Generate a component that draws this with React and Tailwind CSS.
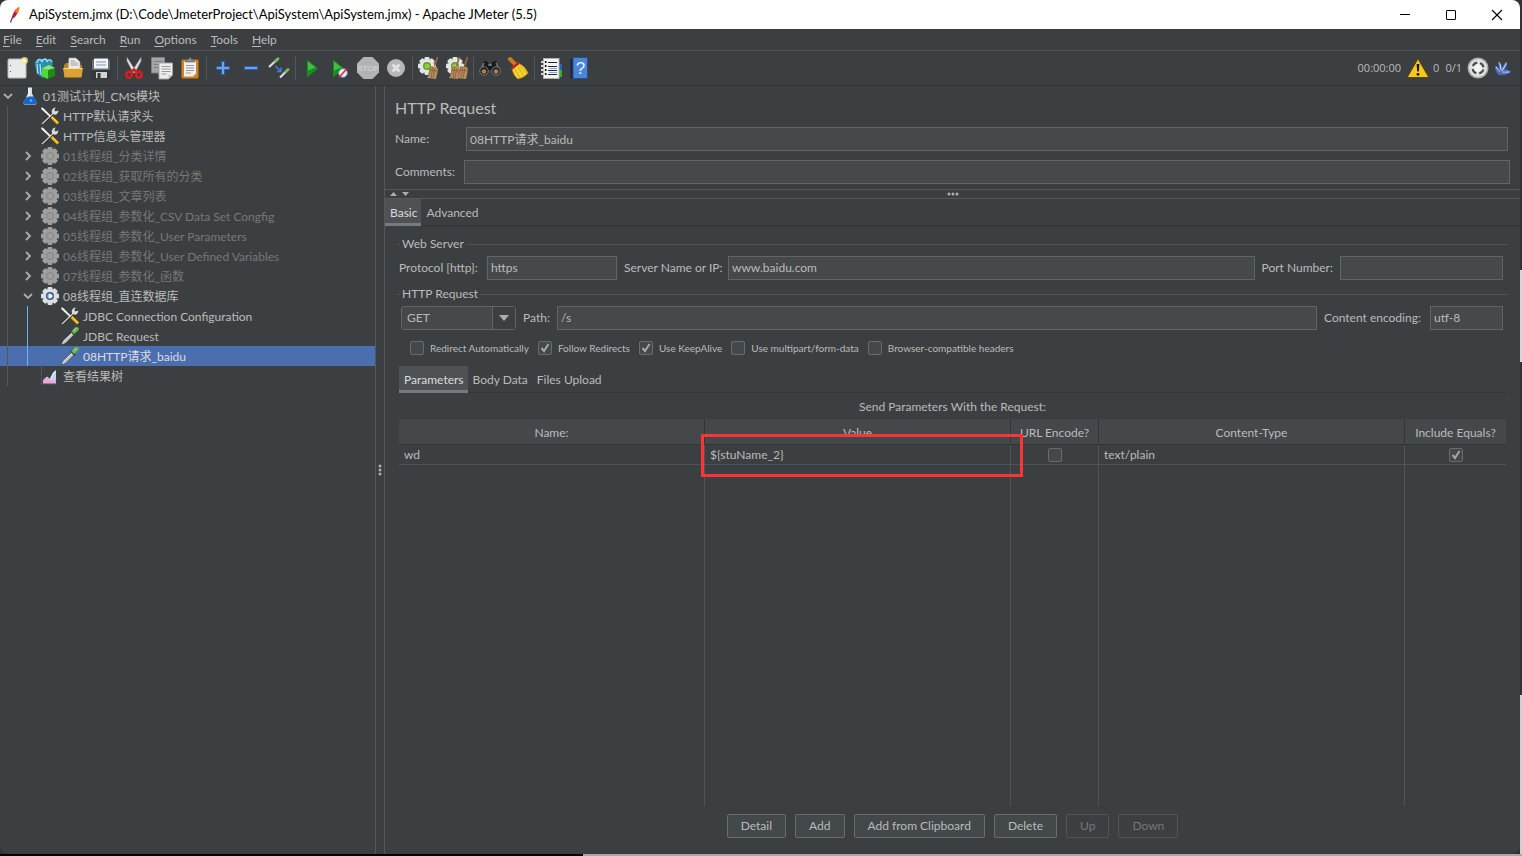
import { useState } from "react";

const menus = ["File", "Edit", "Search", "Run", "Options", "Tools", "Help"];

const tree = [
  { depth: 0, label: "01测试计划_CMS模块", icon: "flask", state: "open" },
  { depth: 1, label: "HTTP默认请求头", icon: "tools" },
  { depth: 1, label: "HTTP信息头管理器", icon: "tools" },
  { depth: 1, label: "01线程组_分类详情", icon: "gearOff", state: "closed", disabled: true },
  { depth: 1, label: "02线程组_获取所有的分类", icon: "gearOff", state: "closed", disabled: true },
  { depth: 1, label: "03线程组_文章列表", icon: "gearOff", state: "closed", disabled: true },
  { depth: 1, label: "04线程组_参数化_CSV Data Set Congfig", icon: "gearOff", state: "closed", disabled: true },
  { depth: 1, label: "05线程组_参数化_User Parameters", icon: "gearOff", state: "closed", disabled: true },
  { depth: 1, label: "06线程组_参数化_User Defined Variables", icon: "gearOff", state: "closed", disabled: true },
  { depth: 1, label: "07线程组_参数化_函数", icon: "gearOff", state: "closed", disabled: true },
  { depth: 1, label: "08线程组_直连数据库", icon: "gear", state: "open" },
  { depth: 2, label: "JDBC Connection Configuration", icon: "tools" },
  { depth: 2, label: "JDBC Request", icon: "pipette" },
  { depth: 2, label: "08HTTP请求_baidu", icon: "pipette" },
  { depth: 1, label: "查看结果树", icon: "chart" },
];

const toolbar = [
  ["new", "templates", "open", "save"],
  ["cut", "copy", "paste"],
  ["expand", "collapse", "toggle"],
  ["start", "startNoTimers", "stop", "shutdown"],
  ["clear", "clearAll"],
  ["search", "resetSearch"],
  ["functions", "help"],
];

const gearTeeth = [0, 45, 90, 135, 180, 225, 270, 315];

function Gear({ body, ring, hub }) {
  return (
    <g>
      {gearTeeth.map((a) => (
        <rect key={a} x="7.500" y="1" width="5" height="5" rx="1.200" fill={body} transform={`rotate(${a} 10 10)`} />
      ))}
      <circle cx="10" cy="10" r="7.100" fill={body} />
      <circle cx="10" cy="10" r="4" fill={ring} />
      <circle cx="10" cy="10" r="2.600" fill={hub} />
    </g>
  );
}

function Broom({ x = 0 }) {
  return (
    <g transform={`translate(${x} 0)`}>
      <path d="M20.500 1l-3 9" stroke="#9a6a40" strokeWidth="1.600" />
      <path d="M13 10l7 1 1 3-2 9-9-1c2-3 2-8 3-12z" fill="#b98d62" />
      <path d="M14 11l-3 10M16 11l-2 11M18 12l-2 10M12.500 14l8 1" stroke="#80582f" strokeWidth=".7" />
    </g>
  );
}

const drawings = {
  flask: (
    <>
      <path d="M8 1.500h4v6l4.500 9c.4 1.200-.2 2-1.200 2H4.700c-1 0-1.600-.8-1.200-2L8 7.500z" fill="#d7e3ea" />
      <path d="M6.300 10.500h7.400l3 6c.3 1-.2 1.500-.9 1.500H4.200c-.7 0-1.200-.5-.9-1.500z" fill="#1667c7" />
      <path d="M9 2.500v6l-2 3" stroke="#fff" strokeWidth="1" fill="none" />
      <circle cx="11" cy="14.500" r="1.200" fill="#69b3f5" />
    </>
  ),
  tools: (
    <>
      <path d="M2 18L14.500 6" stroke="#222" strokeWidth="3" />
      <path d="M2 18L14.500 6" stroke="#c9cbcb" strokeWidth="1.600" />
      <path d="M12 7c-.8-2.900.9-5.400 3.800-5.600L14.300 4l1.200 1.500 2.800-1c.2 2.900-2 4.700-4.500 4.100z" fill="#dadcdc" />
      <path d="M1 1.500l2 .2L11 9.800 9.800 11 1.700 3.500z" fill="#f2f2f2" />
      <path d="M11.500 11l6.500 6.500" stroke="#e9a506" strokeWidth="3" />
      <path d="M12 10.900l6.300 6.300" stroke="#ffd640" strokeWidth="1.200" />
    </>
  ),
  gearOff: <Gear body="#9f9f9f" ring="#8c8c8c" hub="#9f9f9f" />,
  gear: (
    <>
      <Gear body="#dcdfe2" ring="#34588f" hub="#9fbde6" />
      <path d="M9 7.500l3.800 2.500L9 12.500z" fill="#fff" />
    </>
  ),
  pipette: (
    <>
      <path d="M1 19l2-4.300L11.500 6.500l2.300 2.300-8.400 8.500z" fill="#e3e6e6" stroke="#3e4242" strokeWidth=".7" />
      <path d="M4 16.500L12 8.500" stroke="#9aa0a0" strokeWidth="1" />
      <path d="M10.500 4.800l4.700 4.700" stroke="#2c5f22" strokeWidth="1.800" />
      <path d="M11.600 5.600l3.200-4c1.300-1.200 4.400-.6 4 1.800-.1.600-.5 1-1 1.400l-3.600 3.200z" fill="#6bb356" />
      <path d="M13.500 5l2.800-2.800" stroke="#b5e3a4" strokeWidth="1" />
    </>
  ),
  chart: (
    <>
      <path d="M1.500 1v17H18" stroke="#6a6e70" strokeDasharray="1 1" fill="none" />
      <path d="M3 17.500v-3l4-3 3 2 4-6.500 2-1.500v12z" fill="#f3a3dc" />
      <path d="M10 12.500l3-6 3-2v9l-3 1.500z" fill="#b9d7f4" />
      <path d="M3.500 14l3.500-3 3 2.500 5.500-9" stroke="#fff" strokeWidth=".8" fill="none" />
    </>
  ),
  new: (
    <>
      <rect x="3" y="3" width="18" height="19" rx="1" fill="#e9e9e9" stroke="#b9b9b9" />
      <path d="M5.500 9v1M5.500 15v1" stroke="#666" />
      <circle cx="19.500" cy="4.500" r="3.500" fill="#f6ea88" opacity=".8" />
      <circle cx="19.500" cy="4.500" r="1.600" fill="#fffbe0" />
    </>
  ),
  templates: (
    <>
      <path d="M1.500 6l7-3 6 1 5 2v13l-10 3-6-5z" fill="#2b8fb4" />
      <path d="M4 7c0-4 4-5 5-1 1-4 5-4 5 0 1-3 4-3 5 0" stroke="#8fe0f5" strokeWidth="1.500" fill="none" />
      <path d="M4 8l1 10M7 8l1 11" stroke="#c4eefa" />
      <path d="M9 12l7-3 6 3v8l-8 3-5-3z" fill="#1c8a1c" />
      <path d="M9 12l6 2v9l-6-3z" fill="#4fdc38" />
      <path d="M9 12l7-3 6 3-7 2z" fill="#8ee572" />
    </>
  ),
  open: (
    <>
      <path d="M3 9l2-2h4l2 2h10v11H3z" fill="#b9801e" />
      <path d="M8 2h7l4 4v9H7z" fill="#ececec" stroke="#aaa" strokeWidth=".6" />
      <path d="M9.500 5H14M9.500 7H17M9.500 9H17" stroke="#8d8d8d" strokeWidth=".8" />
      <path d="M2 12h20l-1.500 9.500h-17z" fill="#dda035" />
      <path d="M2.500 12.500h19" stroke="#ffdd88" />
    </>
  ),
  save: (
    <>
      <path d="M2.500 4.500l1-1.500h17l1 1.500V22h-19z" fill="#6b7078" stroke="#292b2e" strokeWidth=".7" />
      <rect x="5" y="2.500" width="14" height="10" fill="#f3f4f6" />
      <path d="M7 6h10M7 9h10" stroke="#7694bd" />
      <path d="M3 14h18v8H3z" fill="#34373b" />
      <rect x="7" y="16" width="11" height="6" fill="#d2d2d2" />
      <rect x="8.500" y="17" width="3" height="5" fill="#333" />
    </>
  ),
  cut: (
    <>
      <path d="M5 1.500l8.500 13-2.200 2.500L5 5zM19 1.500l-8.500 13 2.200 2.500L19 5z" fill="#e4e6e6" stroke="#9a9d9e" strokeWidth=".6" />
      <ellipse cx="7" cy="18.800" rx="2.800" ry="3" stroke="#dd1c1c" strokeWidth="2.400" fill="none" />
      <ellipse cx="17" cy="18.800" rx="2.800" ry="3" stroke="#dd1c1c" strokeWidth="2.400" fill="none" />
      <path d="M8.500 16l3.500-2.500 3.500 2.500" stroke="#dd1c1c" strokeWidth="2.400" fill="none" />
    </>
  ),
  copy: (
    <>
      <path d="M1.500 1.500h13V17h-13z" fill="#a4a6a6" stroke="#7d7f80" />
      <path d="M4 5.500h9M4 8.500h8M4 11.500h5" stroke="#7d7f80" />
      <path d="M9 7h13.500v12l-4 4H9z" fill="#ededed" stroke="#a6a6a6" />
      <path d="M11.500 10.500h9M11.500 13h9M11.500 15.500h9M11.500 18h5" stroke="#9c9c9c" />
      <path d="M22.500 19h-4v4z" fill="#c4c4c4" />
    </>
  ),
  paste: (
    <>
      <rect x="3.500" y="3.500" width="17" height="19" rx="1.500" fill="#c9852b" stroke="#93590f" />
      <path d="M6 5.500h12v12l-3 3H6z" fill="#f0f0f0" />
      <path d="M8 9.500h8M8 12h8M8 14.500h8M8 17h5" stroke="#999" />
      <path d="M7.500 6l1-2.500h2C10.500 1 13.500 1 13.500 3.500h2l1 2.500z" fill="#8d9090" stroke="#555" strokeWidth=".6" />
    </>
  ),
  expand: <path d="M10.500 5.500h3v5h5v3h-5v5h-3v-5h-5v-3h5z" fill="#6ba4e8" stroke="#275fae" />,
  collapse: <rect x="5.500" y="10.500" width="13" height="3" fill="#6ba4e8" stroke="#275fae" />,
  toggle: (
    <>
      <path d="M2 11l6.500-6" stroke="#dcdfdf" strokeWidth="2.200" />
      <path d="M8.500 5L11 2.800" stroke="#74b95e" strokeWidth="3" strokeLinecap="round" />
      <path d="M13 21.500l6-6" stroke="#dcdfdf" strokeWidth="2.200" />
      <path d="M19 15.500l2-2" stroke="#74b95e" strokeWidth="3" strokeLinecap="round" />
      <path d="M8.500 10l5 5M14 11.500v4h-4" stroke="#3c7de0" strokeWidth="1.500" fill="none" />
    </>
  ),
  start: (
    <>
      <path d="M7 3.500l11 9L7 21.500z" fill="#178f1b" />
      <path d="M8 5.500l7.500 6L8 14.500z" fill="#43bd43" />
    </>
  ),
  startNoTimers: (
    <>
      <path d="M5 3.500l11 9L5 21.500z" fill="#178f1b" />
      <path d="M6 5.500l7.500 6L6 14.500z" fill="#43bd43" />
      <circle cx="15" cy="17" r="4.400" fill="#e7edf5" stroke="#5983bd" />
      <path d="M11 21.500l8-9" stroke="#e02a2a" strokeWidth="1.500" />
    </>
  ),
  stop: (
    <>
      <path d="M7.500 1h9L23 7.500v9L16.500 23h-9L1 16.500v-9z" fill="#b4b4b4" />
      <text x="12" y="15" textAnchor="middle" fontSize="8" fontWeight="bold" fill="#cfcfcf" fontFamily="Liberation Sans, sans-serif">
        STOP
      </text>
    </>
  ),
  shutdown: (
    <>
      <circle cx="12" cy="12" r="9" fill="#b6b6b6" />
      <path d="M8.500 8.500l7 7M15.500 8.500l-7 7" stroke="#e2e2e2" strokeWidth="3" />
    </>
  ),
  clear: (
    <>
      <Gear body="#e3e5e6" ring="#5f9d27" hub="#8ed13f" />
      <Broom />
    </>
  ),
  clearAll: (
    <>
      <Gear body="#e3e5e6" ring="#5f9d27" hub="#8ed13f" />
      <Broom x={-6} />
      <Broom x={2} />
    </>
  ),
  search: (
    <>
      <path d="M6 5l4 1v4h4V6l4-1 4 9-1 4h-6l-1-4h-4l-1 4H3l-1-4z" fill="#17191a" />
      <path d="M6 7l-2.500 5M18 7l2.500 5M10.500 9h3" stroke="#85898b" strokeWidth="1.300" />
      <circle cx="6" cy="15" r="4.200" fill="#202020" stroke="#777b7d" />
      <circle cx="18" cy="15" r="4.200" fill="#202020" stroke="#777b7d" />
      <circle cx="6" cy="15.500" r="2.300" fill="#bd7850" />
      <circle cx="18" cy="15.500" r="2.300" fill="#bd7850" />
    </>
  ),
  resetSearch: (
    <>
      <path d="M4 3l5 5" stroke="#c77a21" strokeWidth="4" strokeLinecap="round" />
      <path d="M13 7.500c4 2 7 5 9 9.500-2 3-6 5-10 6-3-2-5-6-6-10z" fill="#f2d430" stroke="#b9920f" strokeWidth=".7" />
      <path d="M12 11l6 9M9 13l5 9M14 10l7 7" stroke="#c49d12" strokeWidth=".7" />
      <path d="M5.500 12.800l7.500-6" stroke="#c91f1f" strokeWidth="2.500" />
    </>
  ),
  functions: (
    <>
      <path d="M19 8h4v6h-4z" fill="#2364c4" />
      <path d="M19 14h4v7h-4z" fill="#36ad2c" />
      <rect x="4.500" y="2.500" width="15.500" height="20" fill="#f4f4f4" stroke="#b0b0b0" />
      <path d="M9 6.500h9M9 10.500h9M9 14.500h9M9 18.500h9" stroke="#20262c" />
      <path d="M10 12.500h8M10 16.500h8" stroke="#85a8d8" />
      <path d="M2 6h5M2 10h5M2 14h5M2 18h5" stroke="#d5d5d5" strokeWidth="2" />
      <path d="M6 6h1.500M6 10h1.500M6 14h1.500M6 18h1.500" stroke="#111" strokeWidth="2" />
    </>
  ),
  help: (
    <>
      <path d="M3.500 3l3-1.500v21h-3z" fill="#16263d" />
      <rect x="6" y="1.500" width="14.500" height="21" fill="#4a86d6" stroke="#264f8d" />
      <text x="13.500" y="18" textAnchor="middle" fontSize="17" fill="#e9f2ff" fontFamily="Liberation Sans, sans-serif">
        ?
      </text>
    </>
  ),
};

function Icon({ name, box = 24, className }) {
  return (
    <svg viewBox={`0 0 ${box} ${box}`} className={`shrink-0 ${className}`} fill="none" aria-hidden="true">
      {drawings[name]}
    </svg>
  );
}

function TitleBar() {
  const btn = "flex w-[46px] items-center justify-center";
  return (
    <header className="flex h-[29px] shrink-0 items-stretch bg-white text-black">
      <div className="flex flex-1 items-center pl-2">
        <svg viewBox="0 0 14 18" className="mr-[7px] h-[18px] w-[14px]" fill="none">
          <path d="M11 1c1 2-1 6-4 10l-3 2c0-5 3-10 7-12z" fill="#d22128" />
          <path d="M11 1c1 1 0 4-2 6l-2-1c1-2 2-4 4-5z" fill="#f08a24" />
          <path d="M7 7c-2 3-3.500 6-4.500 9.500" stroke="#6d2a7f" strokeWidth="1.200" />
        </svg>
        <h1 className="pb-[2px] text-[13px]">
          ApiSystem.jmx (D:\Code\JmeterProject\ApiSystem\ApiSystem.jmx) - Apache JMeter (5.5)
        </h1>
      </div>
      <button aria-label="Minimize" className={btn}>
        <span className="h-px w-[10px] bg-black" />
      </button>
      <button aria-label="Maximize" className={btn}>
        <span className="size-[10px] rounded-[1px] border border-black" />
      </button>
      <button aria-label="Close" className={btn}>
        <svg viewBox="0 0 12 12" className="size-3">
          <path d="M1 1l10 10M11 1L1 11" stroke="#000" strokeWidth="1.100" />
        </svg>
      </button>
    </header>
  );
}

function MenuBar() {
  return (
    <nav className="flex h-[22px] shrink-0 items-center gap-[14px] border-b border-[#515151] pl-[3px]">
      {menus.map((m) => (
        <button key={m}>
          <span className="underline underline-offset-2">{m[0]}</span>
          {m.slice(1)}
        </button>
      ))}
    </nav>
  );
}

function Toolbar() {
  return (
    <div className="flex h-[35px] shrink-0 items-center border-b border-[#323232] pr-2 pl-[3px]">
      {toolbar.map((group, i) => (
        <div key={i} className="flex items-center">
          {i > 0 && <span className="mx-[2px] h-6 w-px bg-[#515658]" />}
          {group.map((name) => (
            <button key={name} aria-label={name} className="flex h-7 w-7 items-center justify-center">
              <Icon name={name} className="size-6" />
            </button>
          ))}
        </div>
      ))}
      <div className="ml-auto flex items-center">
        <span className="font-['Open_Sans'] text-[11px]">00:00:00</span>
        <button aria-label="Show log" className="mr-[3px] ml-[5px]">
          <svg viewBox="0 0 24 22" className="h-[22px] w-6">
            <path d="M12 1.500L23 20.500H1z" fill="#f8c81c" stroke="#57470b" strokeWidth="1.200" strokeLinejoin="round" />
            <path d="M10.600 7h2.800l-.6 7.500h-1.600z" fill="#151515" />
            <circle cx="12" cy="17.300" r="1.400" fill="#151515" />
          </svg>
        </button>
        <span className="font-['Open_Sans'] text-[11px]">0</span>
        <span className="ml-[6px] font-['Open_Sans'] text-[11px]">0/1</span>
        <svg viewBox="0 0 22 22" className="ml-[5px] size-[22px]" fill="none">
          <circle cx="11" cy="11" r="10.500" fill="#a9a9a9" />
          <circle cx="11" cy="11" r="9" fill="#e3e3e3" />
          <circle cx="11" cy="11" r="5.500" stroke="#4b4d4e" strokeWidth="2.200" strokeDasharray="5.600 3.040" strokeDashoffset="-1.500" />
          <circle cx="11" cy="11" r="3.800" fill="#f4f4f4" />
        </svg>
        <svg viewBox="0 0 18 18" className="ml-[5px] size-[18px]" fill="none">
          <path d="M1 7c1-1 3 1 4 3L4 3c2 0 4 3 4 5l4-5c2 1 1 5-1 7l6 2c0 2-4 4-8 4H6c-3 0-5-5-5-9z" fill="#3f6fd0" />
          <path d="M2 8l4 5M6 5l1 6M12 5l-4 7M15 13H8" stroke="#dbe6fb" />
          <path d="M3 11l5 2 5-1" stroke="#e4572e" strokeWidth=".8" />
          <path d="M5 3l1 2M12.500 3.500l-1 1.500" stroke="#f2b33c" />
        </svg>
      </div>
    </div>
  );
}

function TreeRow({ node, selected, onSelect }) {
  return (
    <li
      role="treeitem"
      aria-selected={selected}
      onClick={onSelect}
      className={`flex h-5 items-center ${selected ? "bg-[#4b6eaf] text-[#dddddd]" : ""} ${node.disabled ? "text-[#777777]" : ""}`}
    >
      {node.depth > 0 && <span className="ml-[7px] h-5 w-[13px] border-l border-[#55585a]" />}
      {node.depth > 1 && <span className="ml-[7px] h-5 w-[13px] border-l border-[#6fb0ee]" />}
      {node.state ? (
        <button aria-label="Toggle" className="flex w-5 justify-start pl-[3px]">
          <svg viewBox="0 0 10 10" className="size-[10px]" fill="none">
            <path d={node.state === "open" ? "M1 3l4 4 4-4" : "M3 1l4 4-4 4"} stroke="#adadad" strokeWidth="1.800" />
          </svg>
        </button>
      ) : (
        <span className="w-5" />
      )}
      <Icon name={node.icon} box={20} className="mr-[3px] size-5" />
      <span className="pt-[2px] whitespace-nowrap">{node.label}</span>
    </li>
  );
}

function Check({ id, defaultChecked }) {
  return (
    <span className="relative block size-[14px]">
      <input
        id={id}
        type="checkbox"
        aria-label={id}
        defaultChecked={defaultChecked}
        className="peer block size-[14px] appearance-none rounded-[2px] border border-[#6b6b6b] bg-[#43494a]"
      />
      <svg viewBox="0 0 14 14" className="pointer-events-none absolute inset-0 hidden size-[14px] peer-checked:block" fill="none">
        <path d="M3.500 7l2.500 3L10.500 3" stroke="#a7a7a7" strokeWidth="2" />
      </svg>
    </span>
  );
}

function Field({ id, label, value = "", labelClass = "", inputClass = "" }) {
  return (
    <>
      <label htmlFor={id} className={`shrink-0 whitespace-nowrap ${labelClass}`}>
        {label}
      </label>
      <input
        id={id}
        defaultValue={value}
        className={`h-6 min-w-0 border border-[#646464] bg-[#45494a] px-[3px] pb-[2px] outline-none ${inputClass}`}
      />
    </>
  );
}

function Tabs({ items }) {
  const [active, setActive] = useState(items[0]);
  return (
    <div role="tablist" className="flex h-[27px] shrink-0 border-b border-[#323537]">
      {items.map((t) => (
        <button
          key={t}
          role="tab"
          aria-selected={t === active}
          onClick={() => setActive(t)}
          className={`h-[27px] border-b-3 pt-[3px] pr-1 pl-[5px] ${
            t === active ? "border-[#747a80] bg-[#4e5254] text-[#dddddd]" : "border-transparent"
          }`}
        >
          {t}
        </button>
      ))}
    </div>
  );
}

function ParamsTable() {
  const th = "h-[26px] border-b border-[#323537] bg-[#45484a] p-0 pt-[2px] font-normal";
  const td = "h-5 border-b border-[#505355] px-[5px] py-0";
  const line = "border-r border-r-[#505355]";
  return (
    <table className="h-full w-full table-fixed border-separate border-spacing-0 text-left">
      <thead>
        <tr className="text-center">
          <th className={`${th} border-r`}>Name:</th>
          <th className={`${th} border-r`}>Value</th>
          <th className={`${th} w-[88px] border-r`}>URL Encode?</th>
          <th className={`${th} border-r`}>Content-Type</th>
          <th className={`${th} w-[101px]`}>Include Equals?</th>
        </tr>
      </thead>
      <tbody>
        <tr>
          <td className={`${td} ${line}`}>wd</td>
          <td className={`${td} ${line} relative`}>
            {"${stuName_2}"}
            <span className="pointer-events-none absolute -top-[11px] -right-[13px] -left-1 h-[43px] border-3 border-[#fb3434]" />
          </td>
          <td className={`${td} ${line}`}>
            <div className="flex justify-center">
              <Check id="URL Encode" />
            </div>
          </td>
          <td className={`${td} ${line}`}>text/plain</td>
          <td className={td}>
            <div className="flex justify-center">
              <Check id="Include Equals" defaultChecked />
            </div>
          </td>
        </tr>
        <tr className="h-full">
          <td className={line} />
          <td className={line} />
          <td className={line} />
          <td className={line} />
          <td />
        </tr>
      </tbody>
    </table>
  );
}

const options = [
  { label: "Redirect Automatically" },
  { label: "Follow Redirects", checked: true },
  { label: "Use KeepAlive", checked: true },
  { label: "Use multipart/form-data" },
  { label: "Browser-compatible headers" },
];

const actions = [
  { label: "Detail" },
  { label: "Add" },
  { label: "Add from Clipboard" },
  { label: "Delete" },
  { label: "Up", disabled: true },
  { label: "Down", disabled: true },
];

function RequestPanel() {
  return (
    <main className="flex min-w-0 flex-1 flex-col border-l border-[#55585a]">
      <div className="pt-[10px] pl-[10px]">
        <h2 className="text-base leading-6">HTTP Request</h2>
        <div className="mt-[7px] flex items-center pr-3">
          <Field id="name" label="Name:" value="08HTTP请求_baidu" labelClass="w-[71px]" inputClass="flex-1" />
        </div>
        <div className="mt-[9px] flex items-center pr-[10px]">
          <Field id="comments" label="Comments:" labelClass="w-[69px]" inputClass="flex-1" />
        </div>
      </div>

      {/* Splitter between the header and the sampler settings */}
      <div className="mt-[5px] flex h-[10px] shrink-0 items-center justify-between border-y border-[#55585a] px-[5px]">
        <svg viewBox="0 0 20 6" className="h-[6px] w-5" fill="#adadad">
          <path d="M0 5h7L3.500 1zM12 1h7l-3.500 4z" />
        </svg>
        <svg viewBox="0 0 12 4" className="h-1 w-3" fill="#adadad">
          <circle cx="2" cy="2" r="1.500" />
          <circle cx="6" cy="2" r="1.500" />
          <circle cx="10" cy="2" r="1.500" />
        </svg>
        <span className="w-5" />
      </div>

      <Tabs items={["Basic", "Advanced"]} />

      <fieldset className="mx-3 mt-[10px] border-t border-[#515456] pr-[5px] pl-[2px]">
        <legend className="ml-[1px] px-[2px] leading-4">Web Server</legend>
        <div className="flex items-center gap-[7px] pt-1">
          <Field id="protocol" label="Protocol [http]:" value="https" labelClass="w-[81px]" inputClass="w-[130px]" />
          <Field id="server" label="Server Name or IP:" value="www.baidu.com" labelClass="w-[97px]" inputClass="flex-1" />
          <Field id="port" label="Port Number:" inputClass="w-[163px]" />
        </div>
      </fieldset>

      <fieldset className="mx-3 mt-[6px] border-t border-[#515456] pr-[5px] pl-[2px]">
        <legend className="ml-[1px] px-[2px] leading-4">HTTP Request</legend>
        <div className="flex items-center gap-[7px] pt-1 pl-[2px]">
          <div className="relative h-6 w-[115px] shrink-0">
            <select
              aria-label="Method"
              className="block h-6 w-full appearance-none rounded-[3px] border border-[#646464] bg-[#45494a] pl-[5px] outline-none"
            >
              <option>GET</option>
              <option>POST</option>
            </select>
            <span className="pointer-events-none absolute inset-y-px right-px flex w-[23px] items-center justify-center border-l border-[#646464] bg-[#3c3f41]">
              <svg viewBox="0 0 10 6" className="h-[6px] w-[10px]" fill="#adadad">
                <path d="M0 0h10L5 6z" />
              </svg>
            </span>
          </div>
          <Field id="path" label="Path:" value="/s" inputClass="flex-1" />
          <Field id="encoding" label="Content encoding:" value="utf-8" labelClass="w-[99px]" inputClass="w-[73px]" />
        </div>
        <div className="mt-[11px] flex h-[14px] items-center gap-[9px] pl-[11px] text-[10px]">
          {options.map((o) => (
            <div key={o.label} className="flex items-center gap-[6px]">
              <Check id={o.label} defaultChecked={o.checked} />
              <label htmlFor={o.label}>{o.label}</label>
            </div>
          ))}
        </div>
      </fieldset>

      <section className="mx-[14px] mt-[11px] flex min-h-0 flex-1 flex-col">
        <Tabs items={["Parameters", "Body Data", "Files Upload"]} />
        <h3 className="flex h-[26px] shrink-0 items-center justify-center pt-[2px]">
          Send Parameters With the Request:
        </h3>
        <div className="min-h-0 flex-1">
          <ParamsTable />
        </div>
        <div className="flex shrink-0 justify-center gap-[9px] pt-2 pb-4">
          {actions.map((a) => (
            <button
              key={a.label}
              disabled={a.disabled}
              className="h-6 rounded-[2px] border border-[#6a6d6e] bg-[#43484a] px-[13px] disabled:border-[#515456] disabled:bg-transparent disabled:text-[#777777]"
            >
              {a.label}
            </button>
          ))}
        </div>
      </section>
    </main>
  );
}

export default function App() {
  const [selected, setSelected] = useState(13);

  return (
    <div className="flex h-screen flex-col bg-[#303234] font-['Lato','Noto_Sans_CJK_SC',sans-serif] text-[12px] leading-4 text-[#bbbbbb]">
      <div className="flex min-h-0 flex-1">
        <div className="flex min-w-0 flex-1 flex-col overflow-hidden rounded-lg bg-[#3c3f41]">
          <TitleBar />
          <MenuBar />
          <Toolbar />
          <div className="flex min-h-0 flex-1">
            <ul role="tree" className="w-[376px] shrink-0 overflow-hidden border-r border-[#55585a]">
              {tree.map((node, i) => (
                <TreeRow key={node.label} node={node} selected={i === selected} onSelect={() => setSelected(i)} />
              ))}
            </ul>
            <div className="flex w-2 shrink-0 flex-col items-center justify-center">
              <svg viewBox="0 0 4 12" className="h-3 w-1" fill="#adadad">
                <circle cx="2" cy="2" r="1.500" />
                <circle cx="2" cy="6" r="1.500" />
                <circle cx="2" cy="10" r="1.500" />
              </svg>
            </div>
            <RequestPanel />
          </div>
        </div>
        {/* Sliver of the desktop behind the window */}
        <div className="flex w-[2px] flex-col">
          <span className="flex-[270]" />
          <span className="flex-[92] bg-[#d8d8d8]" />
          <span className="flex-[333]" />
          <span className="flex-[159] bg-[#d0d0d0]" />
        </div>
      </div>
      <div className="flex h-[2px] shrink-0">
        <span className="flex-[583] bg-black" />
        <span className="flex-[939] bg-[#a8a8a8]" />
      </div>
    </div>
  );
}
